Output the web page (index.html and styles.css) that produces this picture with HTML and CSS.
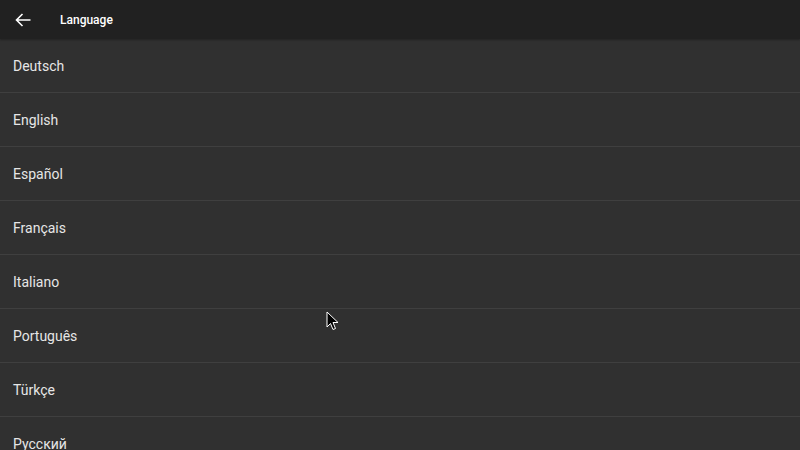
FILE: index.html
```html
<!DOCTYPE html>
<html>
<head>
<meta charset="utf-8">
<link rel="stylesheet" href="styles.css">
</head>
<body>
<header class="bar">
  <svg class="back" width="22" height="22" viewBox="0 0 22 22"><path d="M18.5 11H4.5M10.5 5L4.5 11L10.5 17" fill="none" stroke="#fff" stroke-width="1.6" stroke-linecap="butt"/></svg>
  <span class="title">Language</span>
</header>
<ul class="list">
  <li>Deutsch</li>
  <li>English</li>
  <li>Español</li>
  <li>Français</li>
  <li>Italiano</li>
  <li>Português</li>
  <li>Türkçe</li>
  <li>Русский</li>
</ul>
<svg class="cursor" width="14" height="20" viewBox="0 0 14 20"><path d="M1 1 L1 16 L4.5 12.5 L7 18.5 L9.5 17.5 L7 11.5 L12 11.5 Z" fill="#000" stroke="#fff" stroke-width="1" stroke-linejoin="round"/></svg>
</body>
</html>
```
FILE: styles.css
```css
html, body {
  margin: 0;
  padding: 0;
  background: #303030;
  overflow: hidden;
  font-family: Roboto, "Noto Sans", sans-serif;
}
.bar {
  height: 39px;
  background: #212121;
  display: flex;
  align-items: center;
  padding-left: 12px;
  box-shadow: 0 1px 2px rgba(0,0,0,0.3);
  position: relative;
}
.back {
  display: block;
}
.title {
  margin-left: 26px;
  color: #fff;
  font-size: 12px;
  font-weight: 500;
}
.list {
  list-style: none;
  margin: 0;
  padding: 0;
}
.list li {
  height: 53px;
  border-bottom: 1px solid #3f3f3f;
  display: flex;
  align-items: center;
  padding-left: 13px;
  color: #e6e6e6;
  font-size: 14px;
}
.cursor {
  position: absolute;
  left: 326px;
  top: 311px;
}
```
